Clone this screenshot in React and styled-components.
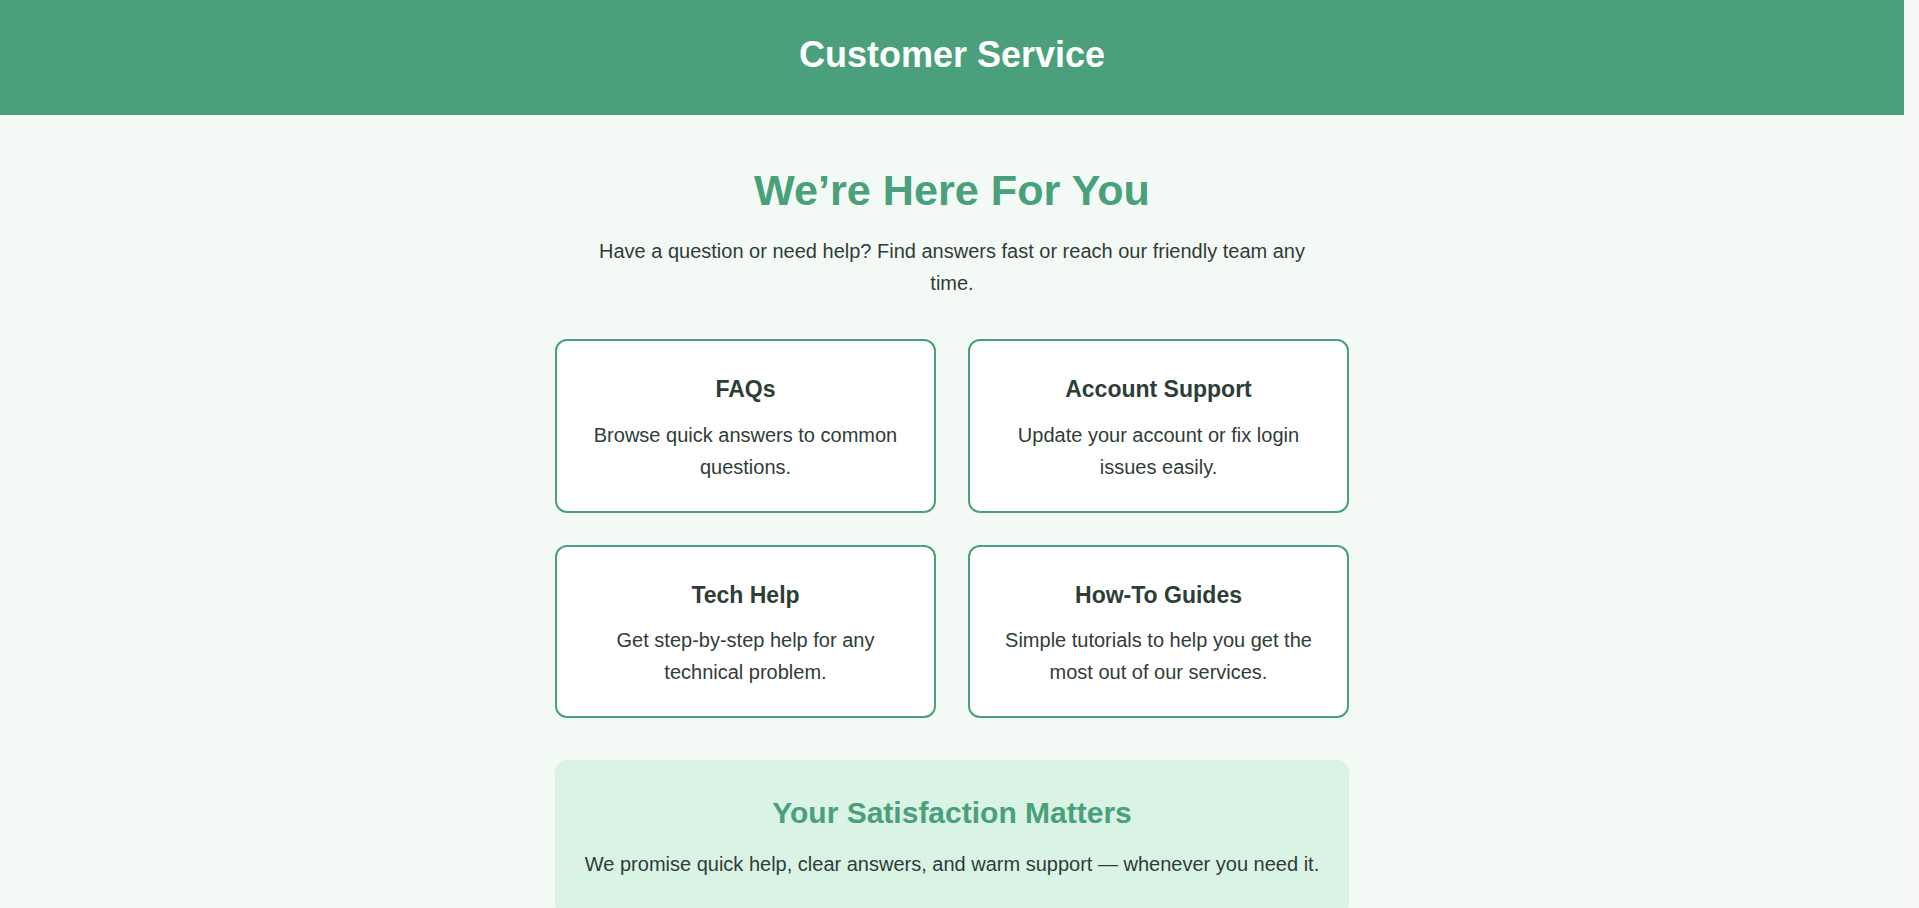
import React from 'react'
import styled, { createGlobalStyle } from 'styled-components'

const GlobalStyle = createGlobalStyle`
    html {
        overflow-y: scroll;
        background-color: #f8f8f8;
    }
    html, body {
        margin: 0;
        padding: 0;
    }
    body {
        margin-right: 15px;
        background-color: #f3faf5;
        font-family: "Liberation Sans", Arial, sans-serif;
        color: #2f3d36;
    }
`

const Header = styled.header`
    background-color: #4aa07a;
    padding: 34px 20px 40px;
    text-align: center;
`

const HeaderTitle = styled.h1`
    margin: 0;
    color: #ffffff;
    font-size: 36px;
    line-height: 1.15;
    font-weight: 700;
`

const Main = styled.main`
    width: 794px;
    margin: 0 auto;
    padding: 51px 0 114px;
    display: flex;
    flex-direction: column;
    align-items: center;
`

const Heading = styled.h2`
    margin: 0;
    color: #4aa07a;
    font-size: 43.2px;
    line-height: 1.15;
    font-weight: 700;
`

const Intro = styled.p`
    margin: 19px 0 0;
    max-width: 740px;
    text-align: center;
    font-size: 20px;
    line-height: 1.6;
`

const CardGrid = styled.div`
    width: 100%;
    margin-top: 40px;
    display: grid;
    grid-template-columns: 1fr 1fr;
    gap: 32px;
`

const Card = styled.div`
    background-color: #ffffff;
    border: 2px solid #4aa07a;
    border-radius: 12px;
    padding: 35px 24px 28px;
    text-align: center;
`

const CardTitle = styled.h3`
    margin: 0 0 16px;
    font-size: 23px;
    line-height: 1.15;
    font-weight: 700;
    color: #2c3e35;
`

const CardText = styled.p`
    margin: 0;
    font-size: 20px;
    line-height: 1.6;
`

const Promise = styled.section`
    width: 100%;
    box-sizing: border-box;
    margin-top: 42px;
    background-color: #d9f3e4;
    border-radius: 12px;
    padding: 36px 24px 36px;
    text-align: center;
`

const PromiseTitle = styled.h3`
    margin: 0 0 18px;
    color: #4aa07a;
    font-size: 30px;
    line-height: 1.15;
    font-weight: 700;
`

const PromiseText = styled.p`
    margin: 0;
    font-size: 20px;
    line-height: 1.6;
`

const cards = [
    { title: 'FAQs', text: 'Browse quick answers to common questions.' },
    { title: 'Account Support', text: 'Update your account or fix login issues easily.' },
    { title: 'Tech Help', text: 'Get step-by-step help for any technical problem.' },
    { title: 'How-To Guides', text: 'Simple tutorials to help you get the most out of our services.' },
]

const App = () => {
    return (
        <>
            <GlobalStyle />
            <Header>
                <HeaderTitle>Customer Service</HeaderTitle>
            </Header>
            <Main>
                <Heading>We’re Here For You</Heading>
                <Intro>
                    Have a question or need help? Find answers fast or reach our friendly team any time.
                </Intro>
                <CardGrid>
                    {cards.map((card) => (
                        <Card key={card.title}>
                            <CardTitle>{card.title}</CardTitle>
                            <CardText>{card.text}</CardText>
                        </Card>
                    ))}
                </CardGrid>
                <Promise>
                    <PromiseTitle>Your Satisfaction Matters</PromiseTitle>
                    <PromiseText>
                        We promise quick help, clear answers, and warm support — whenever you need it.
                    </PromiseText>
                </Promise>
            </Main>
        </>
    )
}

export default App
